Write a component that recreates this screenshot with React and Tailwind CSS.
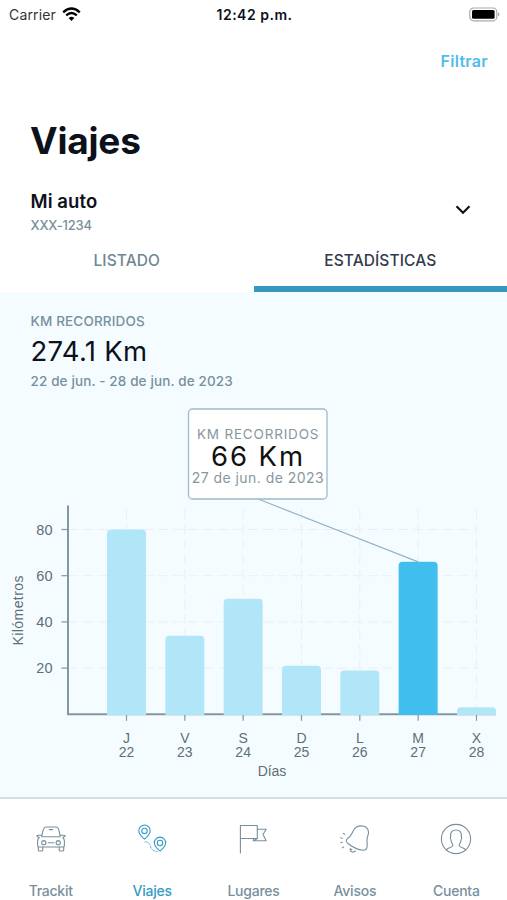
import { useState } from 'react'

const viajes = [
  { dia: 'J', fecha: 22, km: 80 },
  { dia: 'V', fecha: 23, km: 34 },
  { dia: 'S', fecha: 24, km: 50 },
  { dia: 'D', fecha: 25, km: 21 },
  { dia: 'L', fecha: 26, km: 19 },
  { dia: 'M', fecha: 27, km: 66 },
  { dia: 'X', fecha: 28, km: 3 },
]

const BASE = 314.3
const posX = (i) => 126.5 + i * 58.33
const posY = (km) => BASE - km * 2.31

function GraficaKm({ seleccionado, onSeleccionar }) {
  const actual = viajes[seleccionado]
  return (
    <svg width="507" height="397" viewBox="0 0 507 397" className="block shrink-0">
      <g stroke="#e9f0f3" strokeDasharray="10 5">
        {[20, 40, 60, 80].map(v => <path key={v} d={`M68 ${posY(v)}H477`} />)}
        {viajes.map((v, i) => <path key={v.fecha} d={`M${posX(i)} ${BASE}V106`} />)}
      </g>

      <path d="M68 105.5V315M67 314.3H496" fill="none" stroke="#84969f" strokeWidth="2" />
      <g stroke="#84969f" strokeWidth="1.2">
        {[20, 40, 60, 80].map(v => <path key={v} d={`M61.5 ${posY(v)}H68`} />)}
        {viajes.map((v, i) => <path key={v.fecha} d={`M${posX(i)} ${BASE}v6.5`} />)}
      </g>

      {viajes.map((v, i) => {
        const x = posX(i) - 19.5
        const y = posY(v.km)
        return (
          <path key={v.fecha} onClick={() => onSeleccionar(i)}
            d={`M${x} 315V${y + 4}q0 -4 4 -4h31q4 0 4 4V315z`}
            className={i === seleccionado ? 'fill-[#40bfef]' : 'fill-[#b1e6f8]'} />
        )
      })}

      <g className="fill-[#5f6f76] font-['Liberation_Sans',sans-serif] text-[14.5px]">
        {[20, 40, 60, 80].map(v => (
          <text key={v} x="52.5" y={posY(v) + 5.2} textAnchor="end">{v}</text>
        ))}
        {viajes.map((v, i) => (
          <g key={v.fecha} textAnchor="middle" className="text-[14px]">
            <text x={posX(i)} y="342.6">{v.dia}</text>
            <text x={posX(i)} y="357.4">{v.fecha}</text>
          </g>
        ))}
        <text x="272" y="375.6" textAnchor="middle" textLength="28.5" className="text-[14px]">Días</text>
        <text transform="translate(23.3 210.5) rotate(-90)" textAnchor="middle" textLength="70" className="text-[14px]">Kilómetros</text>
      </g>

      <path d={`M258 99L${posX(seleccionado)} ${posY(actual.km)}`} stroke="#94b5c6" strokeWidth="1.2" />
      <rect x="188.5" y="9" width="138.5" height="90" rx="4" fill="#fff" stroke="#9dbbcc" strokeWidth="1.3" />
      <g className="font-['Inter',sans-serif]" textAnchor="middle">
        <text x="257.7" y="38.7" textLength="121.5" className="fill-[#8797a0] text-[13.5px]">KM RECORRIDOS</text>
        <text x="257" y="65.5" textLength="92" className="fill-[#111] text-[27.5px]">{actual.km} Km</text>
        <text x="257.7" y="82.7" textLength="132" className="fill-[#8797a0] text-[14px]">{actual.fecha} de jun. de 2023</text>
      </g>
    </svg>
  )
}

const svgProps = {
  width: 32,
  height: 32,
  viewBox: '0 0 32 32',
  fill: 'none',
  stroke: 'currentColor',
  strokeWidth: 1.1,
  strokeLinecap: 'round',
  strokeLinejoin: 'round',
}

function IconoAuto() {
  return (
    <svg {...svgProps}>
      <path d="M6.8 12.5 8.4 6.3Q9 4.2 11 4H21Q23 4.2 23.6 6.3L25.2 12.5" />
      <path d="M7.5 13.8H24.5Q25.6 13.6 25.2 12.5M7.5 13.8Q6.4 13.6 6.8 12.5M14.3 6.6H17.7" />
      <path d="M6.5 12.2H3.2Q1.4 12.4 2 13.3L4.2 14.5Q2.6 16 2.6 18V22.6Q2.6 24 4 24H28Q29.4 24 29.4 22.6V18Q29.4 16 27.8 14.5L30 13.3Q30.6 12.4 28.8 12.2H25.5" />
      <path d="M3.3 24V27Q3.3 28 4.3 28H6.8Q7.8 28 7.8 27V24M24.2 24V27Q24.2 28 25.2 28H27.7Q28.7 28 28.7 27V24M13.2 19.7H18.8" />
      <circle cx="8.8" cy="19.7" r="2.1" />
      <circle cx="23.2" cy="19.7" r="2.1" />
    </svg>
  )
}

function IconoViajes() {
  return (
    <svg {...svgProps}>
      <path d="M8.5 16.2Q2.8 11.3 2.8 7.7A5.7 5.7 0 0 1 14.2 7.7Q14.2 11.3 8.5 16.2Z" />
      <circle cx="8.5" cy="7.9" r="2.7" />
      <path d="M24 28.2Q18.3 23.4 18.3 19.8A5.7 5.7 0 0 1 29.7 19.8Q29.7 23.4 24 28.2Z" />
      <circle cx="24" cy="20" r="2.7" />
      <path d="M9 18.9Q13.5 18.7 14.3 22.7Q15.3 28.6 22.5 28.5" strokeWidth="0.8" strokeDasharray="1.2 1.4" />
    </svg>
  )
}

function IconoLugares() {
  return (
    <svg {...svgProps} viewBox="-1 0 32 32">
      <path d="M2.4 30V2.5H19.3V15.5H2.4" />
      <path d="M19.3 6.2H28.2L25 11.5 28.2 17.8H15.4V15.7M15.5 17.8 19.3 15.5" />
    </svg>
  )
}

function IconoAvisos() {
  return (
    <svg {...svgProps} viewBox="-1 0 32 32">
      <path d="M14.2 6.2C17.5 1.5 26 1.8 28.2 7.2C29.2 9.7 28 12 27.3 14.5C26.3 18.4 28.2 22 26.7 25.2Q25.9 27.5 23 27.3C17.2 26.7 11.7 23.3 7.5 20.2Q5 17.8 7.4 15.6C11.6 13.2 12 9.3 14.2 6.2Z" />
      <path d="M10.1 25.8C9.7 28.8 12.8 30.2 15.5 27.9M10.1 25.8 11.8 26.6" />
      <path d="M3.4 10.3 4.7 11.4M.8 14.8 2.3 15.3M.8 19.8 2.3 19.3M2.4 24.8 3.7 23.9" />
    </svg>
  )
}

function IconoCuenta() {
  return (
    <svg {...svgProps}>
      <circle cx="16" cy="16" r="14.6" />
      <path d="M6.3 26.8Q7.5 25.4 10.2 24.5Q12.7 23.6 12.8 22.2Q12.9 21.3 12 20.2Q11 18.8 11 16.8Q9.8 15.7 10.6 14C10.2 9.2 12.2 7 16 7S21.8 9.2 21.4 14Q22.2 15.7 21 16.8Q21 18.8 20 20.2Q19.1 21.3 19.2 22.2Q19.3 23.6 21.8 24.5Q24.5 25.4 25.7 26.8" />
    </svg>
  )
}

const menu = [
  { label: 'Trackit', Icono: IconoAuto },
  { label: 'Viajes', Icono: IconoViajes, activo: true },
  { label: 'Lugares', Icono: IconoLugares },
  { label: 'Avisos', Icono: IconoAvisos },
  { label: 'Cuenta', Icono: IconoCuenta },
]

export default function App() {
  const [seleccionado, setSeleccionado] = useState(5)

  return (
    <div className="flex h-[900px] w-[507px] flex-col overflow-hidden bg-white font-['Inter',sans-serif] text-[#0c111b]">
      <div className="grid h-7 shrink-0 grid-cols-3 items-center pl-[9px] pr-[7px] text-[14px]">
        <div className="flex items-center gap-1.5 text-[#333]">
          <span className="tracking-[0.15px]">Carrier</span>
          <svg width="19" height="15" viewBox="0 0 19 15" fill="none" stroke="#000" strokeWidth="2.3">
            <path d="M1.2 5.3Q9.5 -2.2 17.8 5.3M4.2 8.4Q9.5 3.6 14.8 8.4" />
            <path d="M9.5 14 6.6 11Q9.5 8.6 12.4 11Z" fill="#000" stroke="none" />
          </svg>
        </div>
        <span className="text-center font-semibold tracking-[0.5px]">12:42 p.m.</span>
        <svg width="31" height="15" viewBox="0 0 31 15" className="justify-self-end">
          <rect x="0.8" y="1" width="27" height="12.8" rx="3.8" fill="#fff" stroke="#aaa" strokeWidth="1.2" />
          <rect x="3" y="3" width="22.6" height="8.8" rx="1.5" fill="#000" />
          <path d="M29 5.3Q32 7.4 29 9.5Z" fill="#aaa" />
        </svg>
      </div>

      <div className="flex h-16 shrink-0 items-center justify-end pr-[19px] pt-0.5">
        <button className="text-[16px] font-semibold tracking-[0.3px] text-[#50bce9]">Filtrar</button>
      </div>

      <div className="flex h-[94px] shrink-0 items-center pl-[30px] pt-0.5">
        <h1 className="text-[37px] font-bold leading-none tracking-[-0.2px]">Viajes</h1>
      </div>

      <div className="flex h-12 shrink-0 items-center justify-between pl-[30.5px] pr-9">
        <div className="pt-1">
          <p className="text-[18.5px] font-semibold leading-[26px] tracking-[0.1px]">Mi auto</p>
          <p className="text-[13px] font-medium leading-[22px] tracking-[-0.2px] text-[#78909c]">XXX-1234</p>
        </div>
        <svg width="16" height="12" viewBox="0 0 16 12" fill="none" stroke="#111" strokeWidth="2.2">
          <path d="M1.5 2.3 8 8.8 14.5 2.3" />
        </svg>
      </div>

      <div className="grid h-[58px] shrink-0 grid-cols-2 text-[15.5px] font-medium tracking-[0.1px]">
        <button className="border-b-6 border-transparent pt-0.5 text-[#6f8793]">LISTADO</button>
        <button className="border-b-6 border-[#3498bf] pt-0.5 text-[#303a4c]">ESTADÍSTICAS</button>
      </div>

      <div className="flex h-[505px] shrink-0 flex-col bg-[#f5fcff]">
        <div className="h-[108px] shrink-0 pl-[30.5px] pt-[18px]">
          <p className="text-[13.5px] font-medium leading-[22px] tracking-[0.15px] text-[#78909c]">KM RECORRIDOS</p>
          <p className="text-[27.5px] leading-[38px] tracking-[0.3px]">274.1 Km</p>
          <p className="text-[13.5px] font-medium leading-[22px] tracking-[0.13px] text-[#78909c]">22 de jun. - 28 de jun. de 2023</p>
        </div>
        <GraficaKm seleccionado={seleccionado} onSeleccionar={setSeleccionado} />
      </div>

      <nav className="grid h-[103px] shrink-0 grid-cols-5 border-t-2 border-[#d5dfe4] pt-6">
        {menu.map(({ label, Icono, activo }) => (
          <a key={label} className={`flex flex-col items-center ${activo ? 'text-[#359bc5]' : 'text-[#78909c]'}`}>
            <Icono />
            <span className="mt-[25px] text-[14px] font-medium leading-[21px] tracking-[-0.25px]">{label}</span>
          </a>
        ))}
      </nav>
    </div>
  )
}
